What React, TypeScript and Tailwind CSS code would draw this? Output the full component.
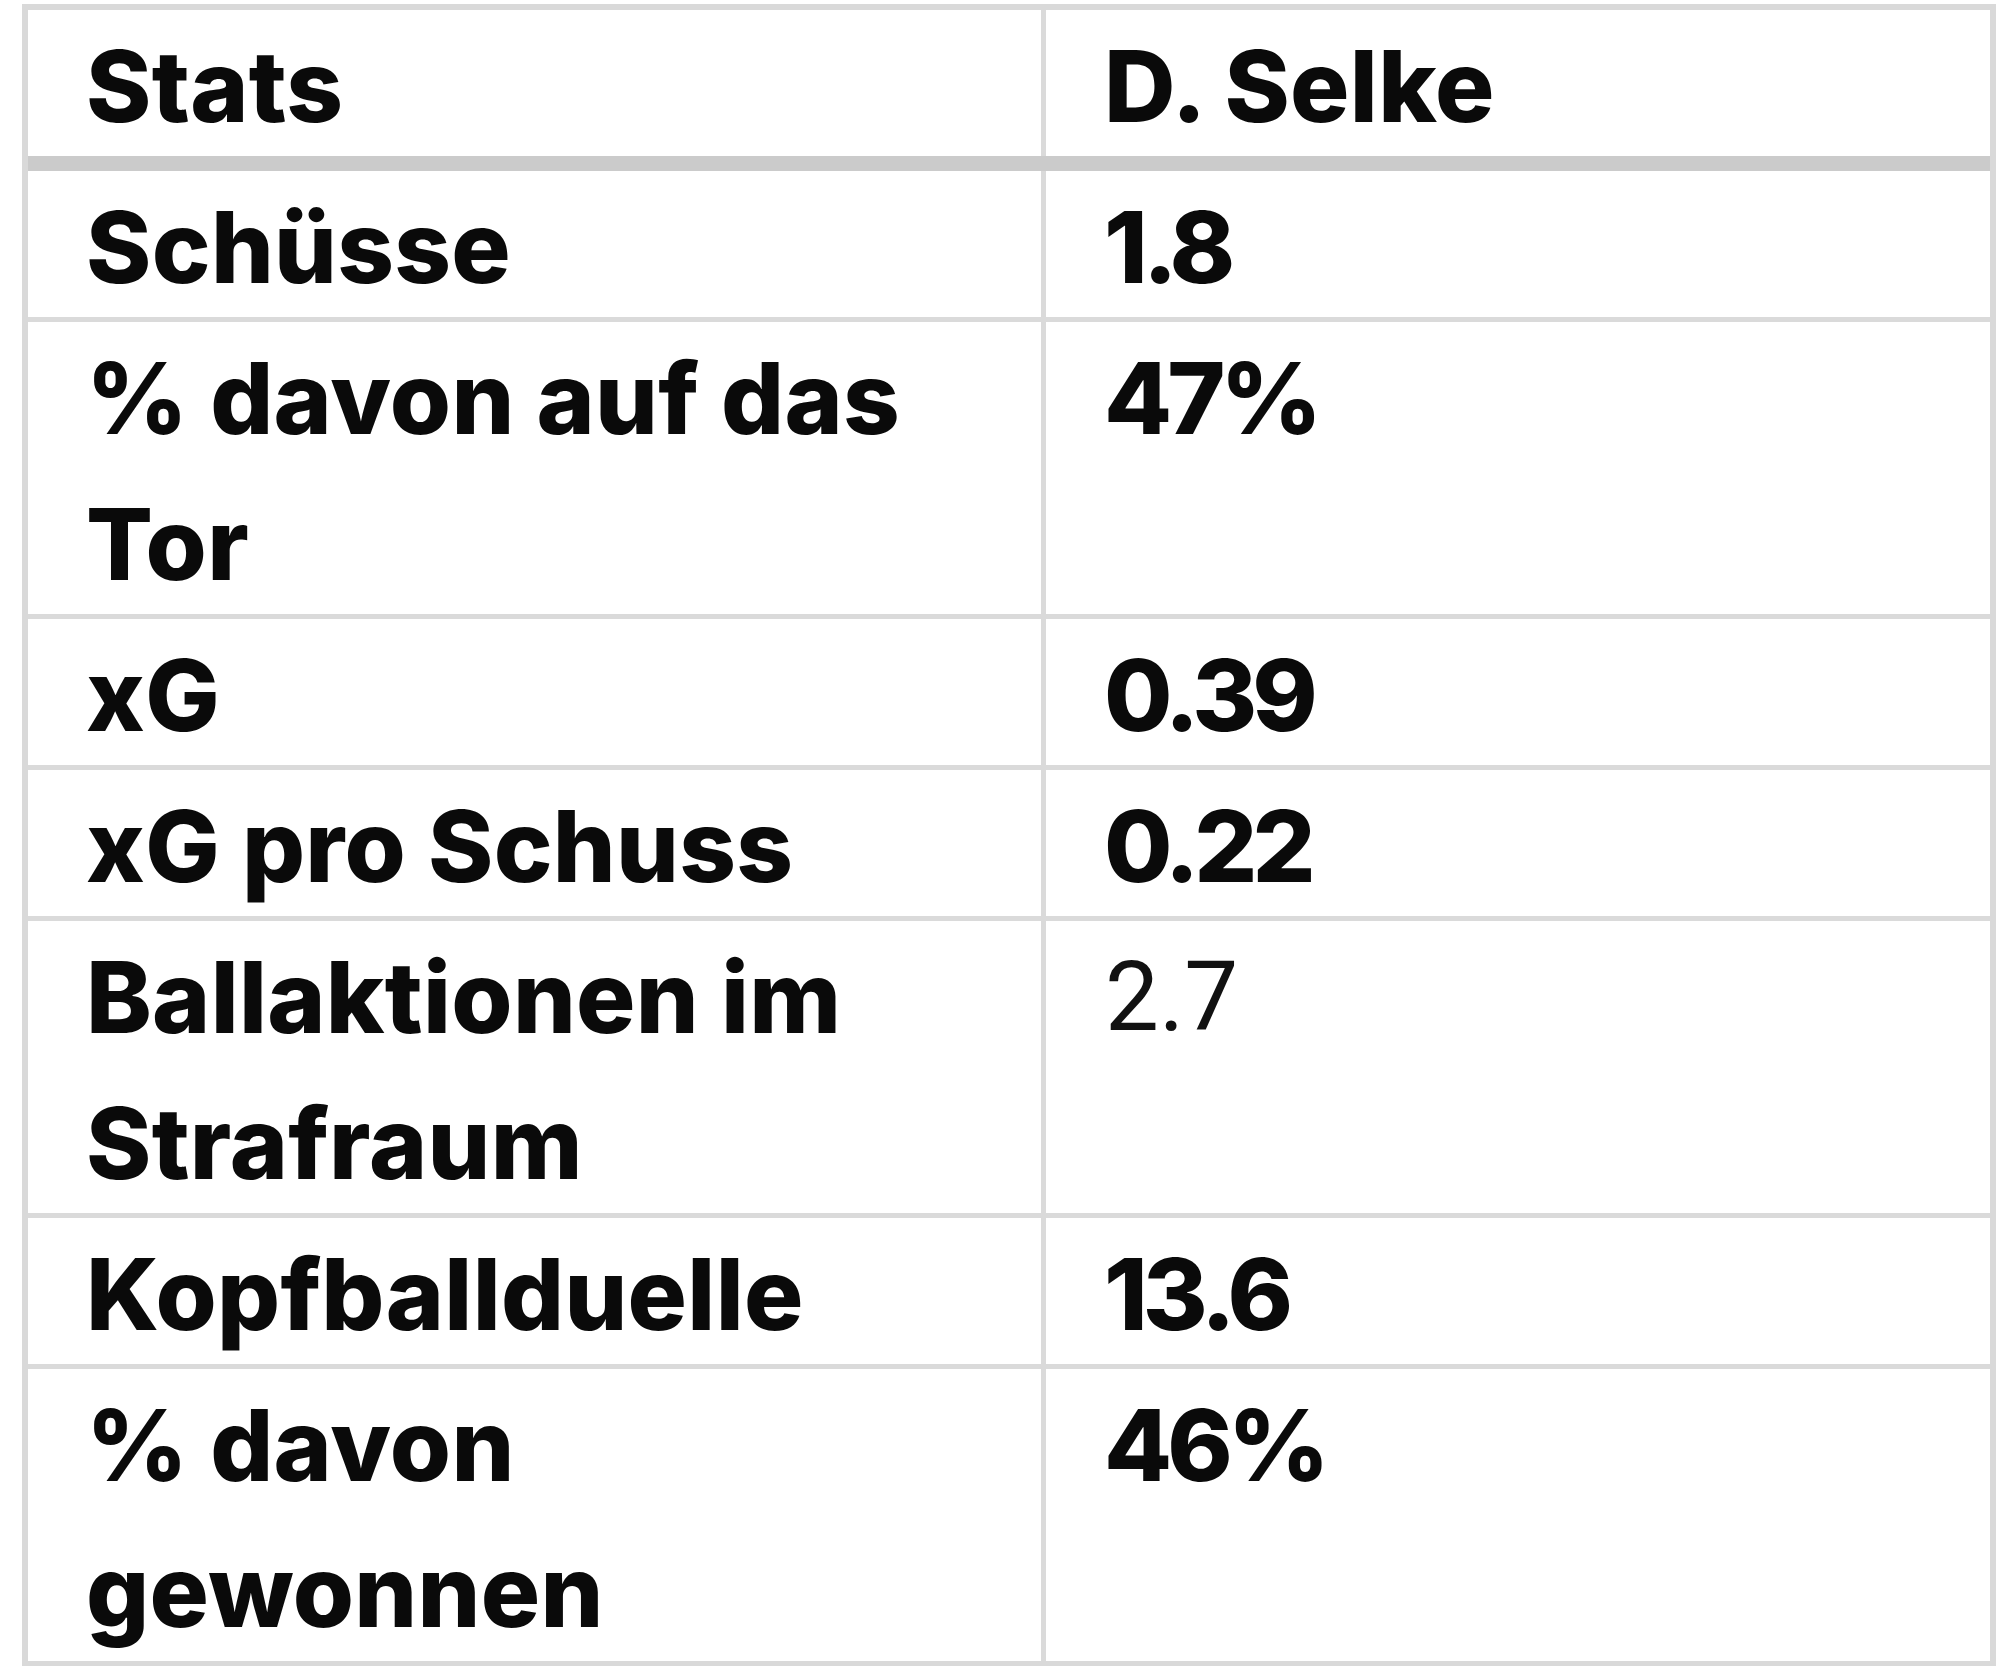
import React from "react";

type Row = { label: React.ReactNode; value: string; light?: boolean };

const rows: Row[] = [
  { label: "Schüsse", value: "1.8" },
  { label: <>% davon auf das<br />Tor</>, value: "47%" },
  { label: "xG", value: "0.39" },
  { label: "xG pro Schuss", value: "0.22" },
  { label: <>Ballaktionen im<br />Strafraum</>, value: "2.7", light: true },
  { label: "Kopfballduelle", value: "13.6" },
  { label: <>% davon<br />gewonnen</>, value: "46%" },
];

const boldBase =
  "font-['Inter',sans-serif] font-extrabold text-[99px] leading-[146px] text-[#0a0a0a]";
const boldFont = `${boldBase} tracking-[0.3px]`;
const numFont = `${boldBase} tracking-[-5px]`;

function T({ children }: { children: React.ReactNode }) {
  return <span className="inline-block translate-y-[3px]">{children}</span>;
}

export default function App() {
  return (
    <div className="w-[2000px] h-[1666px] bg-white pt-[4px] pl-[22px] overflow-hidden">
      <div className="w-[1974px] border-[6px] border-[#d9d9d9] bg-white">
        <div className="grid grid-cols-[1018px_944px] border-b-[15px] border-[#cbcbcb]">
          <div className={`border-r-[5px] border-[#dadada] pl-[58px] ${boldFont}`}>
            <T>Stats</T>
          </div>
          <div className={`pl-[58px] ${boldFont}`}>
            <T>D. Selke</T>
          </div>
        </div>
        {rows.map((r, i) => (
          <div
            key={i}
            className={`grid grid-cols-[1018px_944px] ${i < rows.length - 1 ? "border-b-[5px] border-[#dadada]" : ""}`}
          >
            <div className={`border-r-[5px] border-[#dadada] pl-[58px] ${boldFont}`}>
              <T>{r.label}</T>
            </div>
            <div
              className={
                r.light
                  ? "pl-[59px] font-['Roboto',sans-serif] font-normal text-[96px] leading-[146px] text-[#111]"
                  : `pl-[58px] ${numFont}`
              }
            >
              <T>{r.value}</T>
            </div>
          </div>
        ))}
      </div>
    </div>
  );
}
